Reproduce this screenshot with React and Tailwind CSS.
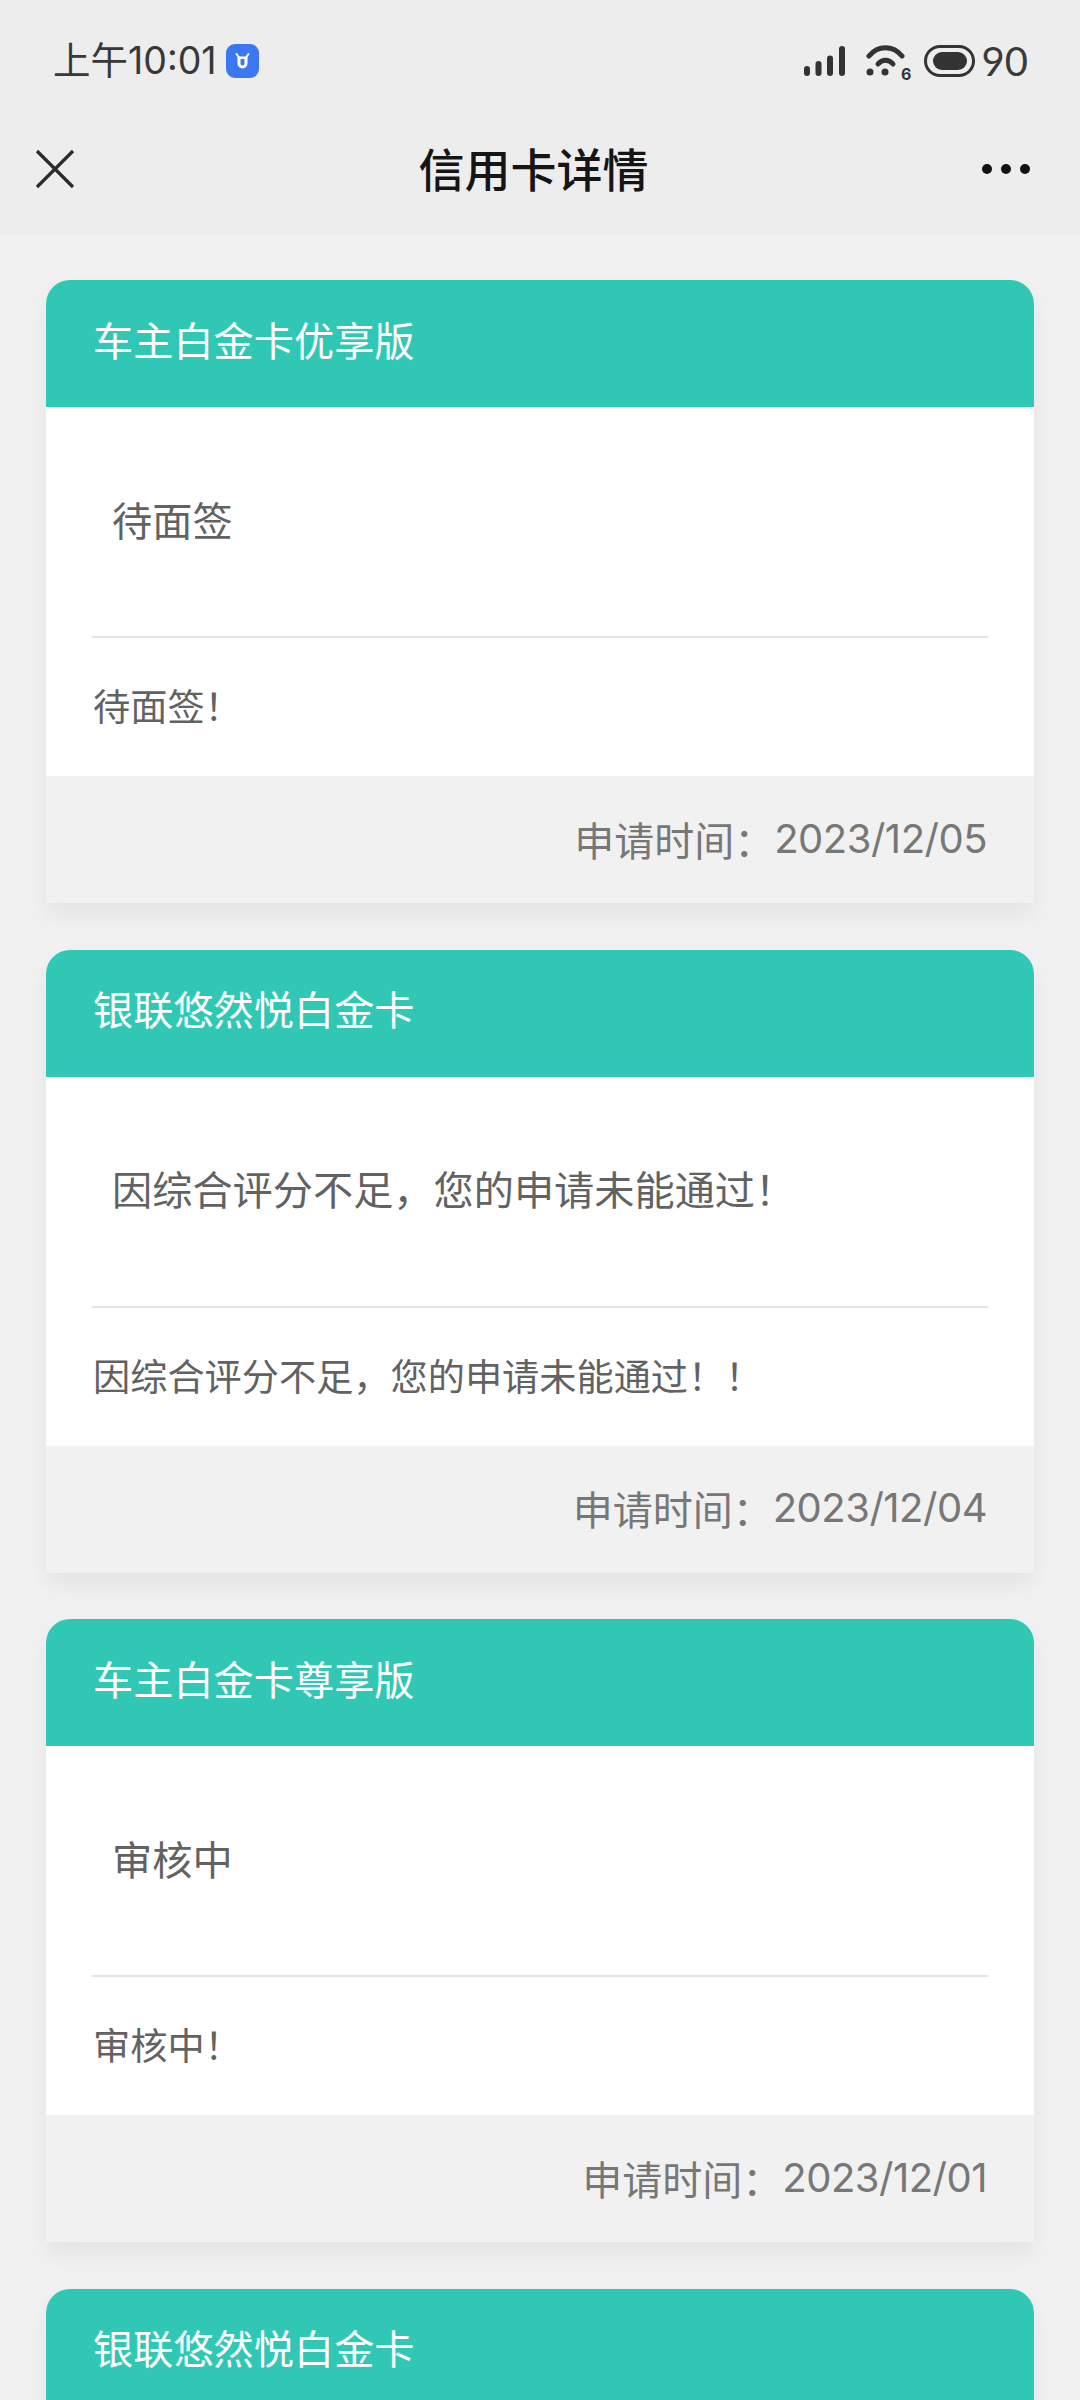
import React from "react";

const cards = [
  { name: "车主白金卡优享版", status: "待面签", message: "待面签！", date: "2023/12/05" },
  { name: "银联悠然悦白金卡", status: "因综合评分不足，您的申请未能通过！", message: "因综合评分不足，您的申请未能通过！！", date: "2023/12/04" },
  { name: "车主白金卡尊享版", status: "审核中", message: "审核中！", date: "2023/12/01" },
  { name: "银联悠然悦白金卡" },
];

const font = { fontFamily: '"Noto Sans CJK SC", "Noto Sans", sans-serif' };

const StatusBar = () => (
  <div className="h-[90px] flex items-end justify-between pl-[53px] pr-[52px] pb-[4px]">
    <div className="flex items-center">
      <span className="text-[37.5px] leading-[50px] text-[#383838]" style={{ fontFamily: '"Inter", "Noto Sans CJK SC", sans-serif' }}>上午10:01</span>
      <svg width="34" height="34" viewBox="0 0 34 34" className="ml-[9px]">
        <rect width="33" height="34" rx="9" fill="#3b77f2" />
        <path d="M10.5 10 L13 13.5 M22.5 10 L20 13.5" stroke="#fff" strokeWidth="2" strokeLinecap="round" />
        <path d="M11.5 12.5 H21.5 V19.5 a5 5 0 0 1 -10 0 Z M14.5 15 V19.5 a2 2 0 0 0 4 0 V15 Z" fill="#fff" fillRule="evenodd" />
      </svg>
    </div>
    <div className="flex items-center">
      <svg width="42" height="32" viewBox="0 0 42 32" fill="#333">
        <rect x="0" y="21" width="6" height="10" rx="3" />
        <rect x="11.5" y="16" width="6" height="15" rx="3" />
        <rect x="23" y="10.5" width="6" height="20.5" rx="3" />
        <rect x="35" y="1" width="6" height="30" rx="3" />
      </svg>
      <svg width="46" height="48" viewBox="0 -4 46 48" className="ml-[20px]">
        <path d="M3 15 C12 4 27 4 36 15" fill="none" stroke="#333" strokeWidth="5" strokeLinecap="round" />
        <path d="M12 23 C16 18 23 18 27 23" fill="none" stroke="#333" strokeWidth="5" strokeLinecap="round" />
        <circle cx="4" cy="31" r="3.5" fill="#333" />
        <circle cx="19" cy="31" r="3.5" fill="#333" />
        <text x="35" y="39" fontSize="16" fontWeight="700" fill="#333" fontFamily="Inter, sans-serif">6</text>
      </svg>
      <svg width="52" height="32" viewBox="0 0 52 32" className="ml-[12px]">
        <rect x="1.5" y="1.5" width="48" height="29" rx="14.5" fill="none" stroke="#333" strokeWidth="3" />
        <rect x="9" y="7" width="34" height="18" rx="9" fill="#333" />
      </svg>
      <span className="ml-[6px] text-[40px] leading-[50px] text-[#3a3a3a]" style={{ fontFamily: '"Lato", sans-serif' }}>90</span>
    </div>
  </div>
);

const NavBar = () => (
  <div className="h-[145px] flex items-center justify-between pl-[35px] pr-[50px] pt-[12px]">
    <svg width="40" height="40" viewBox="0 0 40 40" stroke="#2b2b2b" strokeWidth="3.2" fill="none">
      <path d="M2 2 L38 38 M38 2 L2 38" />
    </svg>
    <h1 className="text-[46px] font-medium text-[#151515] leading-none ml-[10px] mb-[3px]" style={font}>信用卡详情</h1>
    <div className="flex gap-[9px]">
      <span className="w-[10px] h-[10px] rounded-full bg-[#111]" />
      <span className="w-[10px] h-[10px] rounded-full bg-[#111]" />
      <span className="w-[10px] h-[10px] rounded-full bg-[#111]" />
    </div>
  </div>
);

const Card = ({ name, status, message, date }) => (
  <div className="rounded-t-[24px] overflow-hidden bg-white shadow-[0_12px_24px_rgba(0,0,0,0.06)]">
    <div className="h-[127px] bg-[#30c8b4] flex items-center px-[47px] pb-[9px] text-[40.2px] text-white" style={font}>{name}</div>
    {status && (
      <>
        <div className="px-[46px]">
          <div className="h-[231px] flex items-center pl-[20px] pb-[5px] border-b-2 border-[#e3e3e3]">
            <span className="text-[40.2px] text-[#626262]" style={font}>{status}</span>
          </div>
          <div className="h-[138px] flex items-center pl-[1px] pb-[2px]">
            <p className="text-[37.2px] text-[#626262]" style={font}>{message}</p>
          </div>
        </div>
        <div className="h-[127px] bg-[#f1f1f1] flex items-center justify-end pl-[46px] pr-[47px] pb-[2px] text-[#777]">
          <span className="text-[40px]" style={font}>申请时间：</span>
          <span className="text-[40px] tracking-[-0.5px]" style={{ fontFamily: '"Inter", sans-serif' }}>{date}</span>
        </div>
      </>
    )}
  </div>
);

export default function App() {
  return (
    <div className="w-[1080px] h-[2400px] overflow-hidden bg-[#f1f1f1]">
      <div className="bg-[#ededed]">
        <StatusBar />
        <NavBar />
      </div>
      <div className="px-[46px] pt-[45px] flex flex-col gap-[46.5px]">
        {cards.map((c, i) => (
          <Card key={i} {...c} />
        ))}
      </div>
    </div>
  );
}
